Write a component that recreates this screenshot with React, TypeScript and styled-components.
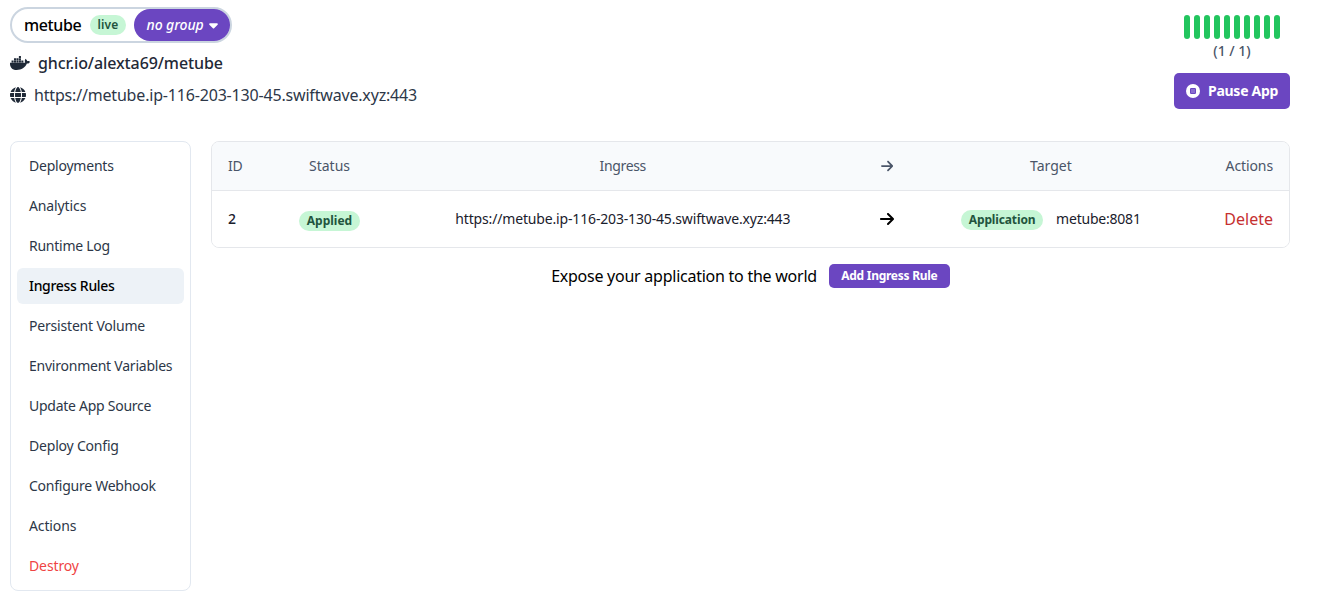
import React from 'react';
import styled, { createGlobalStyle } from 'styled-components';
import { FaArrowRight, FaCaretDown, FaDocker, FaGlobe } from 'react-icons/fa6';

const GlobalStyle = createGlobalStyle`
  *, *::before, *::after { box-sizing: border-box; }
  body {
    margin: 0;
    background: #fff;
    color: #000;
    font-family: 'Noto Sans', 'Open Sans', sans-serif;
    font-size: 16px;
    line-height: 24px;
  }
  button { font-family: inherit; border: 0; cursor: pointer; }
`;

const Page = styled.main`
  width: 1290px;
  padding: 7px 0 12px 10px;
`;

const Icon = styled.span<{ $width: number; $height: number; $color?: string }>`
  display: flex;
  flex: none;
  color: ${p => p.$color ?? 'inherit'};
  svg {
    display: block;
    width: ${p => p.$width}px;
    height: ${p => p.$height}px;
  }
`;

const Header = styled.header`
  display: flex;
  justify-content: space-between;
  align-items: flex-start;
  height: 134px;
`;

const AppInfo = styled.div`
  display: flex;
  flex-direction: column;
  align-items: flex-start;
  gap: 8px;
`;

const NamePill = styled.div`
  display: flex;
  align-items: center;
  width: 222px;
  height: 36px;
  padding-left: 12px;
  border: 2px solid #cbd5e0;
  border-radius: 18px;
`;

const AppName = styled.span`
  width: 58px;
  margin-right: 8px;
  font-weight: 500;
  letter-spacing: -0.38px;
  white-space: nowrap;
`;

const Badge = styled.span<{ $width: number; $weight?: number; $spacing?: number; $shift?: number }>`
  display: flex;
  align-items: center;
  justify-content: center;
  width: ${p => p.$width}px;
  height: 20px;
  margin-top: ${p => p.$shift ?? 0}px;
  border-radius: 10px;
  background: #c6f6d5;
  color: #22543d;
  font-size: 12px;
  line-height: 16px;
  font-weight: ${p => p.$weight ?? 700};
  letter-spacing: ${p => p.$spacing ?? 0}px;
`;

const GroupButton = styled.button`
  display: flex;
  align-items: center;
  gap: 5px;
  width: 96px;
  height: 32px;
  margin-left: 8px;
  padding: 0 0 1px 12.5px;
  border-radius: 16px;
  background: #6b46c1;
  color: #fff;
  font-size: 14px;
  line-height: 20px;
  font-style: italic;
  font-weight: 500;
  letter-spacing: -0.07px;
  white-space: nowrap;
`;

const SourceLine = styled.div<{ $medium?: boolean }>`
  display: flex;
  align-items: center;
  gap: 8px;
  height: 24px;
  color: ${p => (p.$medium ? '#1f2937' : '#2d3748')};
  font-weight: ${p => (p.$medium ? 500 : 400)};
  letter-spacing: ${p => (p.$medium ? -0.09 : -0.18)}px;
`;

const StatusColumn = styled.div`
  display: flex;
  flex-direction: column;
  align-items: center;
  padding-top: 8px;
`;

const HealthBars = styled.div`
  display: flex;
  gap: 4px;
`;

const HealthBar = styled.span`
  width: 6px;
  height: 24px;
  border-radius: 3px;
  background: #22c55e;
`;

const Replicas = styled.span`
  margin: 2px 0 12px;
  color: #4a5568;
  font-size: 14px;
  line-height: 20px;
  font-weight: 500;
`;

const PauseButton = styled.button`
  display: flex;
  align-items: center;
  gap: 8px;
  width: 116px;
  height: 36px;
  padding: 0 12px;
  border-radius: 5px;
  background: #6b46c1;
  color: #fff;
  font-size: 14px;
  line-height: 20px;
  font-weight: 700;
  letter-spacing: -0.27px;
  white-space: nowrap;
`;

const Body = styled.div`
  display: flex;
  align-items: flex-start;
  gap: 20px;
`;

const SideNav = styled.nav`
  display: flex;
  flex-direction: column;
  gap: 4px;
  flex: none;
  width: 181px;
  padding: 6px;
  border: 1px solid #e2e8f0;
  border-radius: 8px;
`;

const NavItem = styled.a<{ $active?: boolean; $danger?: boolean; $spacing: number }>`
  display: flex;
  align-items: center;
  height: 36px;
  padding-left: 12px;
  border-radius: 6px;
  background: ${p => (p.$active ? '#edf2f7' : 'transparent')};
  color: ${p => (p.$active ? '#000' : p.$danger ? '#ef4444' : '#2d3748')};
  font-size: 14px;
  font-weight: ${p => (p.$active ? 500 : 400)};
  letter-spacing: ${p => p.$spacing}px;
  white-space: nowrap;
`;

const Content = styled.section`
  flex: 1;
  min-width: 0;
`;

const Table = styled.div`
  border: 1px solid #e5e7eb;
  border-radius: 8px;
  overflow: hidden;
`;

const Row = styled.div<{ $head?: boolean }>`
  display: grid;
  grid-template-columns: 71px 93px 493.6px 34.8px 293px 1fr;
  align-items: center;
  height: ${p => (p.$head ? 49 : 56)}px;
  border-bottom: ${p => (p.$head ? '1px solid #e5e7eb' : '0')};
  background: ${p => (p.$head ? '#f8fafc' : '#fff')};
  color: ${p => (p.$head ? '#4a5568' : '#1a202c')};
  font-size: 14px;
  line-height: 20px;
`;

const Cell = styled.div<{ $align?: 'flex-start' | 'flex-end'; $spacing?: number; $medium?: boolean }>`
  display: flex;
  align-items: center;
  justify-content: ${p => p.$align ?? 'center'};
  padding: ${p => (p.$align ? '0 16px' : '0')};
  font-weight: ${p => (p.$medium ? 500 : 400)};
  letter-spacing: ${p => p.$spacing ?? 0}px;
  white-space: nowrap;
`;

const TargetName = styled.span`
  margin-left: 13px;
`;

const DeleteLink = styled.a`
  color: #c53030;
  font-size: 16px;
`;

const ExposeBar = styled.div`
  display: flex;
  align-items: center;
  justify-content: center;
  gap: 12px;
  margin-top: 16px;
  letter-spacing: -0.25px;
`;

const AddButton = styled.button`
  width: 121px;
  height: 24px;
  padding: 0;
  border-radius: 5px;
  background: #6b46c1;
  color: #fff;
  font-size: 12px;
  line-height: 16px;
  font-weight: 700;
  letter-spacing: -0.26px;
`;

const navItems = [
  { label: 'Deployments', spacing: -0.22 },
  { label: 'Analytics', spacing: -0.12 },
  { label: 'Runtime Log', spacing: -0.26 },
  { label: 'Ingress Rules', spacing: -0.31, active: true },
  { label: 'Persistent Volume', spacing: -0.19 },
  { label: 'Environment Variables', spacing: -0.23 },
  { label: 'Update App Source', spacing: -0.26 },
  { label: 'Deploy Config', spacing: -0.2 },
  { label: 'Configure Webhook', spacing: -0.25 },
  { label: 'Actions', spacing: -0.12 },
  { label: 'Destroy', spacing: -0.12, danger: true },
];

const url = 'https://metube.ip-116-203-130-45.swiftwave.xyz:443';

const StopIcon = () => (
  <svg viewBox="0 0 14 14">
    <circle cx="7" cy="7" r="7" fill="#fff" />
    <rect x="4.5" y="4.5" width="5" height="5" rx="0.3" fill="#8a6dd0" stroke="#6b46c1" strokeWidth="1" />
  </svg>
);

export default function App() {
  return (
    <Page>
      <GlobalStyle />
      <Header>
        <AppInfo>
          <NamePill>
            <AppName>metube</AppName>
            <Badge $width={36} $weight={600} $spacing={0.15}>live</Badge>
            <GroupButton>
              no group
              <Icon $width={9} $height={14}><FaCaretDown /></Icon>
            </GroupButton>
          </NamePill>
          <SourceLine $medium>
            <Icon $width={20} $height={16}><FaDocker /></Icon>
            ghcr.io/alexta69/metube
          </SourceLine>
          <SourceLine>
            <Icon $width={16} $height={16} $color="#1f2937"><FaGlobe /></Icon>
            {url}
          </SourceLine>
        </AppInfo>
        <StatusColumn>
          <HealthBars>
            {Array.from({ length: 10 }, (_, i) => <HealthBar key={i} />)}
          </HealthBars>
          <Replicas>(1 / 1)</Replicas>
          <PauseButton>
            <Icon $width={14} $height={14}><StopIcon /></Icon>
            Pause App
          </PauseButton>
        </StatusColumn>
      </Header>
      <Body>
        <SideNav>
          {navItems.map(item => (
            <NavItem key={item.label} $active={item.active} $danger={item.danger} $spacing={item.spacing}>
              {item.label}
            </NavItem>
          ))}
        </SideNav>
        <Content>
          <Table>
            <Row $head>
              <Cell $align="flex-start" $spacing={-0.3}>ID</Cell>
              <Cell>Status</Cell>
              <Cell $spacing={-0.35}>Ingress</Cell>
              <Cell><Icon $width={12.25} $height={14}><FaArrowRight /></Icon></Cell>
              <Cell>Target</Cell>
              <Cell $align="flex-end" $spacing={-0.1}>Actions</Cell>
            </Row>
            <Row>
              <Cell $align="flex-start" $medium>2</Cell>
              <Cell><Badge $width={61} $shift={3}>Applied</Badge></Cell>
              <Cell $spacing={-0.16}>{url}</Cell>
              <Cell><Icon $width={14} $height={16} $color="#000"><FaArrowRight /></Icon></Cell>
              <Cell $spacing={-0.22}>
                <Badge $width={82} $spacing={-0.13} $shift={1}>Application</Badge>
                <TargetName>metube:8081</TargetName>
              </Cell>
              <Cell $align="flex-end"><DeleteLink>Delete</DeleteLink></Cell>
            </Row>
          </Table>
          <ExposeBar>
            Expose your application to the world
            <AddButton>Add Ingress Rule</AddButton>
          </ExposeBar>
        </Content>
      </Body>
    </Page>
  );
}
